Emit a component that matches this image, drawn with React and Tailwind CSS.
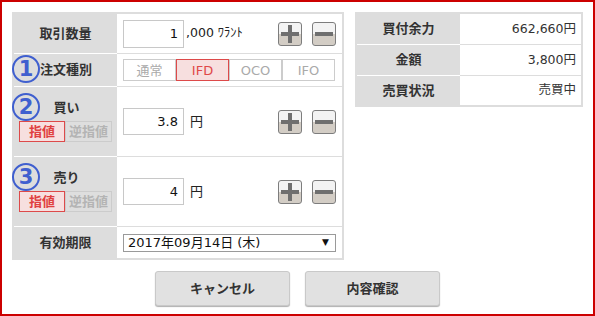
import React from "react";

const FONT = "font-['DejaVu_Sans','Noto_Sans_CJK_JP',sans-serif]";

function Circle({ n, top }) {
  return (
    <div
      className={`absolute left-[-2px] ${top} w-[28px] h-[28px] rounded-full border-2 border-[#3f5fcf] text-[#3f5fcf] flex items-center justify-center text-[21px] font-bold leading-none`}
    >
      {n}
    </div>
  );
}

function PM({ minus }) {
  return (
    <div className="w-[24px] h-[24px] border border-[#7d7d7d] rounded-[3px] bg-[linear-gradient(to_bottom,#f3f3f3_50%,#d3cdc5_50%)] flex items-center justify-center">
      <svg width="18" height="18" viewBox="0 0 18 18">
        <rect x="0" y="7" width="18" height="4" fill="#6f6f6f" />
        {!minus && <rect x="7" y="0" width="4" height="18" fill="#6f6f6f" />}
      </svg>
    </div>
  );
}

function Pair() {
  return (
    <div className="ml-auto flex gap-[10px]">
      <PM />
      <PM minus />
    </div>
  );
}

function Input({ v, h = "h-[28px]" }) {
  return (
    <div
      className={`w-[61px] ${h} border border-[#c8c8c8] bg-white flex items-center justify-end pr-[5px] text-[13px] text-[#111]`}
    >
      {v}
    </div>
  );
}

function OrderType() {
  return (
    <div className="flex justify-center gap-0">
      <div className="w-[46px] h-[21px] border border-[#dd4a4a] bg-[#f7dfdf] text-[#e04040] font-bold text-[13px] flex items-center justify-center leading-none">
        指値
      </div>
      <div className="w-[47px] h-[21px] border border-[#cccccc] bg-[#dedede] text-[#b4b4b4] font-bold text-[13px] flex items-center justify-center leading-none">
        逆指値
      </div>
    </div>
  );
}

function Seg() {
  const items = ["通常", "IFD", "OCO", "IFO"];
  return (
    <div className="flex">
      {items.map((t) =>
        t === "IFD" ? (
          <div
            key={t}
            className="w-[53px] h-[22px] border border-[#dd4a4a] bg-[#f7dfdf] text-[#e04848] text-[13px] flex items-center justify-center leading-none"
          >
            {t}
          </div>
        ) : (
          <div
            key={t}
            className="w-[53px] h-[22px] border border-[#cccccc] bg-white text-[#aaaaaa] text-[13px] flex items-center justify-center leading-none"
          >
            {t}
          </div>
        )
      )}
    </div>
  );
}

export default function App() {
  const label = "w-[103px] shrink-0 bg-[#dddddd] text-[13px] font-bold text-[#333]";
  const val = "flex-1 bg-white flex items-center pl-[6px] pr-[6px]";
  return (
    <div
      className={`${FONT} w-[595px] h-[316px] box-border border-2 border-[#cc0000] bg-white pt-[10px] pl-[10px] text-[#333]`}
    >
      <div className="flex gap-[11px] items-start">
        {/* left table */}
        <div className="w-[332px] border-2 border-[#dddddd] flex flex-col">
          {/* row1 */}
          <div className="flex h-[40px]">
            <div className={`${label} border-b border-white flex items-center justify-center`}>取引数量</div>
            <div className={`${val} border-b border-[#dddddd]`}>
              <Input v="1" />
              <span className="ml-[2px] text-[12.5px] text-[#222]">,000 ﾜﾗﾝﾄ</span>
              <Pair />
            </div>
          </div>
          {/* row2 */}
          <div className="flex h-[33px]">
            <div className={`${label} relative border-b border-white flex items-center pl-[26px]`}>
              <Circle n="1" top="top-[1px]" />
              <span>注文種別</span>
            </div>
            <div className={`${val} border-b border-[#dddddd]`}>
              <Seg />
            </div>
          </div>
          {/* row3 */}
          <div className="flex h-[70px]">
            <div className={`${label} relative border-b border-white flex flex-col pt-[12px]`}>
              <Circle n="2" top="top-[6px]" />
              <div className="text-center leading-[18px] pl-[2px]">買い</div>
              <div className="mt-[4px]">
                <OrderType />
              </div>
            </div>
            <div className={`${val} border-b border-[#dddddd]`}>
              <Input v="3.8" h="h-[27px]" />
              <span className="ml-[6px] text-[13px] text-[#222]">円</span>
              <Pair />
            </div>
          </div>
          {/* row4 */}
          <div className="flex h-[70px]">
            <div className={`${label} relative border-b border-white flex flex-col pt-[12px]`}>
              <Circle n="3" top="top-[6px]" />
              <div className="text-center leading-[18px] pl-[2px]">売り</div>
              <div className="mt-[4px]">
                <OrderType />
              </div>
            </div>
            <div className={`${val} border-b border-[#dddddd]`}>
              <Input v="4" h="h-[27px]" />
              <span className="ml-[6px] text-[13px] text-[#222]">円</span>
              <Pair />
            </div>
          </div>
          {/* row5 */}
          <div className="flex h-[31px]">
            <div className={`${label} flex items-center justify-center`}>有効期限</div>
            <div className={`${val}`}>
              <div className="w-[213px] h-[18px] border border-[#9a9a9a] bg-white flex items-center pl-[4px] pr-[6px] text-[13px] text-[#111] leading-none">
                <span>2017年09月14日 (木)</span>
                <span className="ml-auto text-[9px]">▼</span>
              </div>
            </div>
          </div>
        </div>

        {/* right table */}
        <div className="w-[228px] border-2 border-[#dddddd] flex flex-col">
          {[
            ["買付余力", "662,660円", "h-[31px] border-b"],
            ["金額", "3,800円", "h-[31px] border-b"],
            ["売買状況", "売買中", "h-[29px]"],
          ].map(([k, v, h]) => (
            <div key={k} className="flex">
              <div className={`${label} ${h} border-white flex items-center justify-center`}>{k}</div>
              <div className={`flex-1 bg-white ${h} border-[#dddddd] flex items-center justify-end pr-[5px] text-[12.5px] text-[#333]`}>
                {v}
              </div>
            </div>
          ))}
        </div>
      </div>

      {/* buttons */}
      <div className="flex justify-center gap-[15px] mt-[11px] pr-[10px]">
        {["キャンセル", "内容確認"].map((t) => (
          <div
            key={t}
            className="w-[135px] h-[35px] rounded-[3px] border border-[#c9c9c9] bg-[#e1e1e1] shadow-[0_1px_1px_#b0b0b0] flex items-center justify-center text-[13px] font-bold text-[#333]"
          >
            {t}
          </div>
        ))}
      </div>
    </div>
  );
}
